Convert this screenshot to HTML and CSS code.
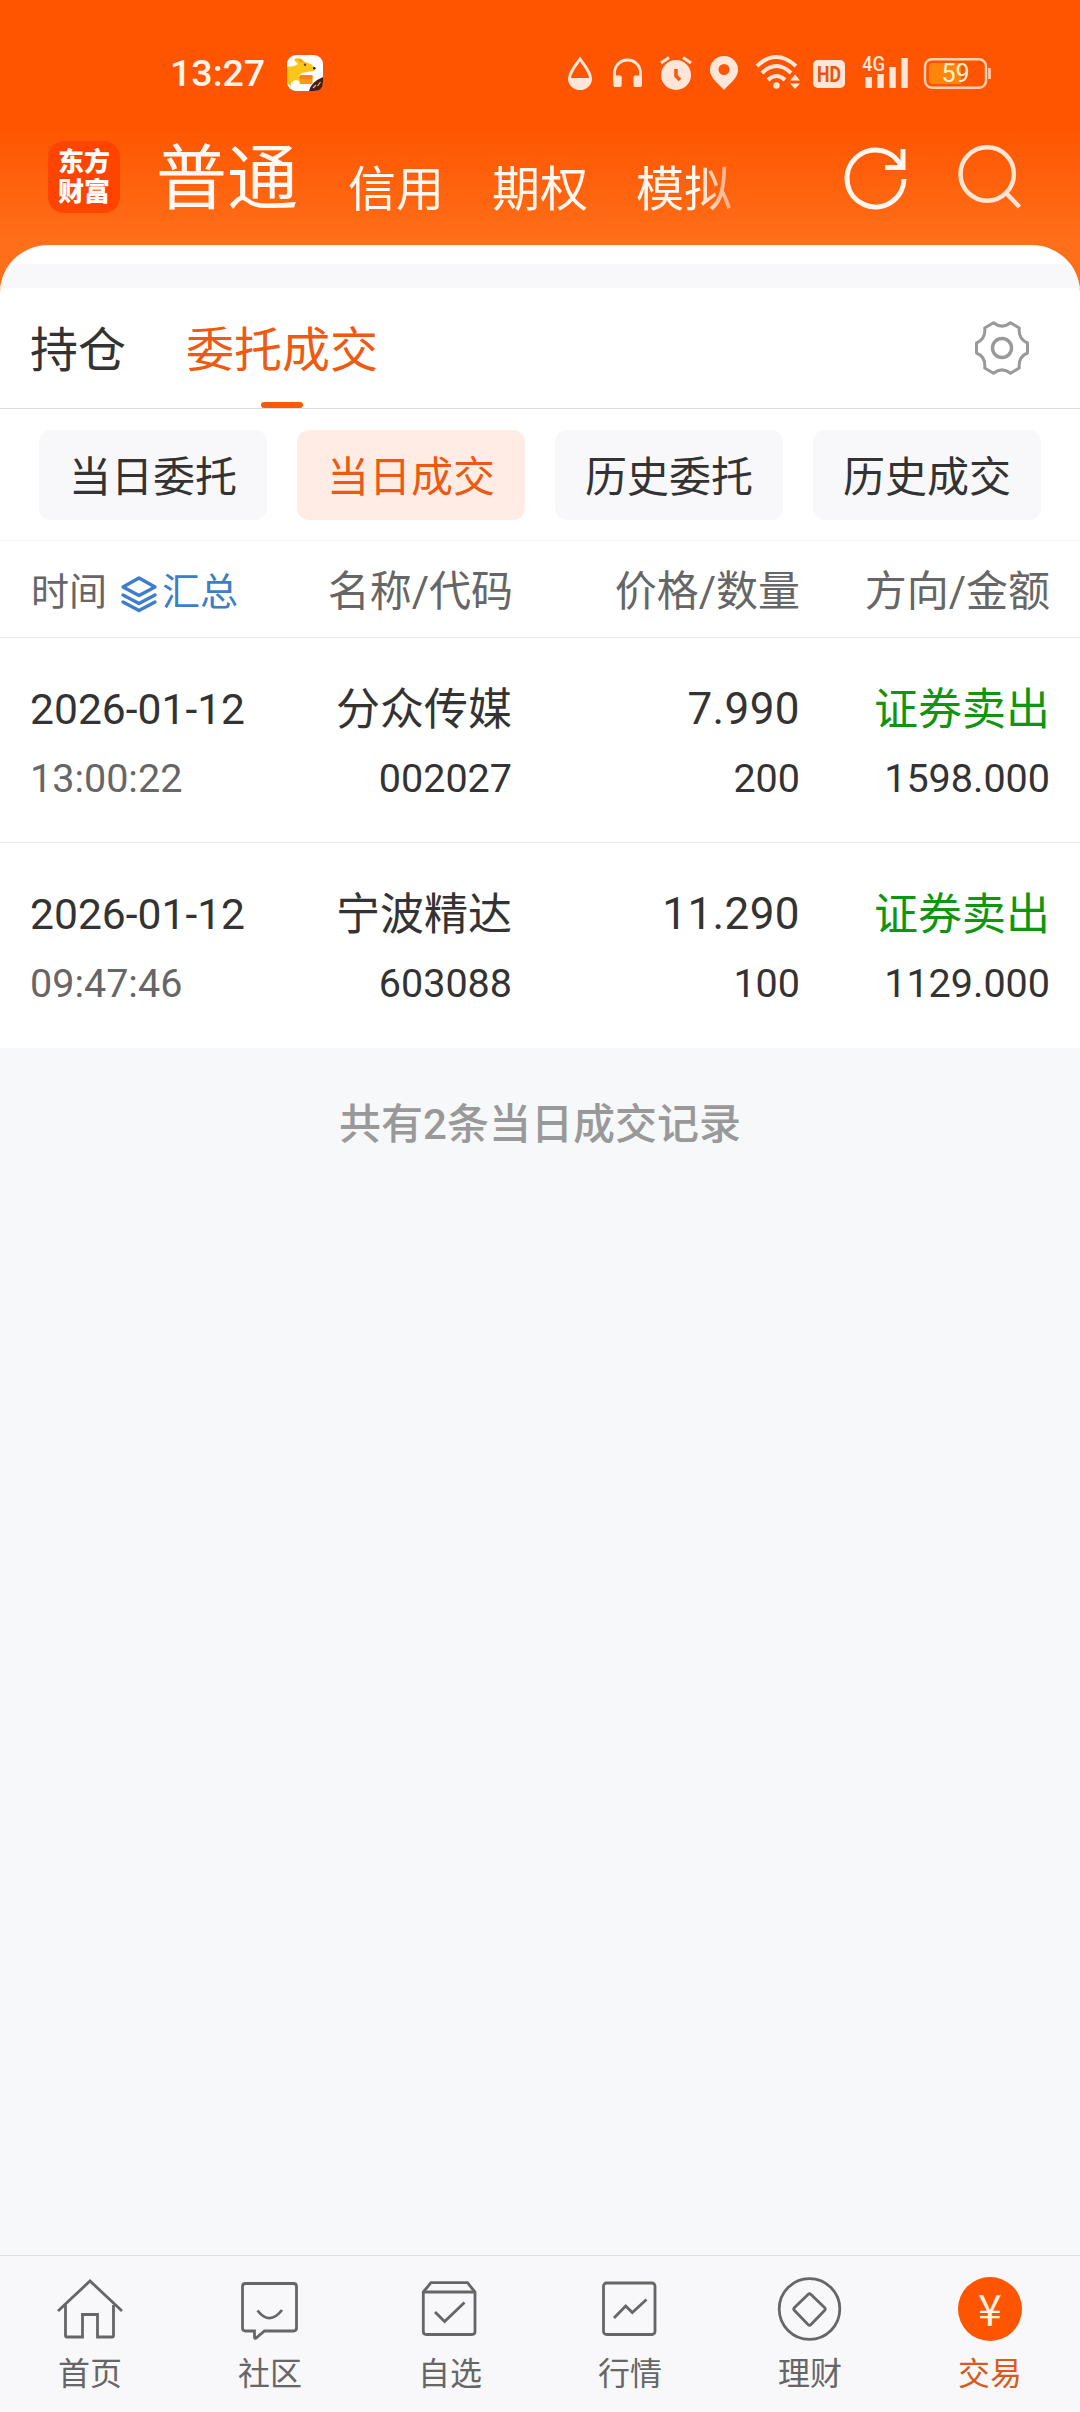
FILE: index.html
```html
<!DOCTYPE html>
<html lang="zh-CN">

<head>
    <meta charset="UTF-8">
    <meta name="viewport" content="width=device-width, initial-scale=1.0">
    <title>当日成交</title>
    <link rel="stylesheet" href="styles.css">
</head>

<body>
    <header class="top">
        <div class="status-bar">
            <span class="time">13:27</span>
            <svg class="app-icon" width="36" height="36" viewBox="0 0 36 36">
                <rect width="36" height="36" rx="9" fill="#fff" />
                <path d="M0 12L7 11L11 9L7 5L9 3L14 4L18 7L24 9L28 13L27 16L20 17L15 18L11 21L14 23L13 26L8 25L4 28L4 31L0 28Z" fill="#fbc51a" />
                <path d="M11 3.500L15 4.500L17 8L12 6.500Z" fill="#f2a60d" />
                <circle cx="18" cy="9.700" r="1.200" fill="#6b4a10" />
                <circle cx="27.300" cy="13.300" r="1.300" fill="#222" />
                <rect x="12.500" y="20" width="13" height="9" rx="1" fill="#fb9b0a" />
                <path d="M12.500 20.500H25.500V24H12.500Z" fill="#f5840c" />
                <path d="M22 36Q24 27 36 22V27Q36 36 27 36Z" fill="#4a1c10" />
                <path d="M26 33l3-3M30.500 31l3-4" stroke="#d9b9a8" stroke-width="1.200" />
            </svg>
            <div class="status-icons">
                <svg width="26" height="36" viewBox="0 0 26 36">
                    <path d="M12 4C8 10 1.500 17 1.500 23.500a10.500 10 0 0 0 21 0C22.500 17 16 10 12 4Z" fill="none" stroke="#ffe6d9" stroke-width="3" />
                    <path d="M1.500 23H22.500a10.500 10.500 0 0 1-21 0Z" fill="#ffe6d9" />
                </svg>
                <svg width="32" height="36" viewBox="0 0 32 36">
                    <path d="M3.500 26V18a13 13 0 0 1 26 0V26" fill="none" stroke="#ffe6d9" stroke-width="2.800" />
                    <rect x="2.200" y="20.500" width="8.500" height="11.500" rx="2" fill="#ffe6d9" />
                    <rect x="22.500" y="20.500" width="8.500" height="11.500" rx="2" fill="#ffe6d9" />
                </svg>
                <svg width="32" height="36" viewBox="0 0 32 36">
                    <circle cx="16" cy="20" r="15" fill="#ffe6d9" />
                    <path d="M1 8L9 2.500M31 8L23 2.500" stroke="#ffe6d9" stroke-width="3" />
                    <path d="M16 14V21L20 25" fill="none" stroke="#ff5500" stroke-width="3.500" />
                </svg>
                <svg width="30" height="36" viewBox="0 0 30 36">
                    <path fill-rule="evenodd" d="M15 1A14 14 0 0 0 1 15C1 23 9 28 15 35C21 28 29 23 29 15A14 14 0 0 0 15 1ZM15 9a5.500 5.500 0 1 1 0 11a5.500 5.500 0 0 1 0-11Z" fill="#ffe6d9" />
                </svg>
                <svg width="44" height="36" viewBox="0 0 44 36">
                    <g fill="none" stroke="#ffe6d9" stroke-width="4">
                        <path d="M1 11Q20 -7 40 11" />
                        <path d="M6 18Q20.500 4 35 18" />
                        <path d="M12 25Q20.500 17 29 25" />
                    </g>
                    <circle cx="20.500" cy="30.500" r="3.200" fill="#ffe6d9" />
                    <path d="M39 19.500L44 25.500H34ZM39 34L34 28.500H44Z" fill="#ffe6d9" />
                </svg>
                <svg class="hd" width="32" height="36" viewBox="0 0 32 36">
                    <rect y="5" width="32" height="28" rx="5" fill="#ffe6d9" />
                    <text x="16" y="27" text-anchor="middle" font-size="22" font-weight="700" fill="#e8540c" textLength="24" lengthAdjust="spacingAndGlyphs">HD</text>
                </svg>
                <svg width="46" height="36" viewBox="0 0 46 36">
                    <text x="0" y="16" font-size="21" font-weight="500" fill="#ffe6d9" textLength="23" lengthAdjust="spacingAndGlyphs">4G</text>
                    <path d="M6.700 22V33M18.500 19V33M30.500 12V33M42.500 3V33" stroke="#ffe6d9" stroke-width="6.500" />
                </svg>
                <svg class="battery" width="66" height="36" viewBox="0 0 66 36">
                    <rect x="1" y="4.200" width="61" height="28.600" rx="7" fill="none" stroke="#ffd2b5" stroke-width="2.400" />
                    <path d="M9 8H37V29H9a4 4 0 0 1-4-4V12a4 4 0 0 1 4-4Z" fill="#ff860d" />
                    <path d="M65.500 13V24" stroke="#ffd2b5" stroke-width="2.600" />
                    <text x="31.500" y="27" text-anchor="middle" font-size="25" fill="#fff0cf">59</text>
                </svg>
            </div>
        </div>

        <div class="nav-bar">
            <div class="logo">东方<br>财富</div>
            <nav class="accounts">
                <span class="account current">普通</span>
                <span class="account">信用</span>
                <span class="account">期权</span>
                <span class="account">模拟</span>
            </nav>
            <div class="actions">
                <svg width="64" height="64" viewBox="0 0 64 64" fill="none" stroke="#fff6f0" stroke-width="5">
                    <path d="M59 34A28.500 28.500 0 1 1 57 23" />
                    <path d="M58 4V22.500H40" />
                </svg>
                <svg width="64" height="64" viewBox="0 0 64 64" fill="none" stroke="#ffe5d5" stroke-width="4.500">
                    <circle cx="29.200" cy="29" r="26.700" />
                    <path d="M47.500 47.500L61.500 62" />
                </svg>
            </div>
        </div>
    </header>

    <main class="card">
        <div class="band"></div>
        <div class="tabs">
            <span class="tab">持仓</span>
            <span class="tab active">委托成交</span>
            <svg class="settings" width="54" height="54" viewBox="0 0 54 54" fill="none" stroke="#999" stroke-width="3" stroke-linejoin="round">
                <path d="M18.500 1.800Q27 8.500 35.500 1.800L44.300 7Q43 18 52.500 22V32Q43 36 44.300 47L35.500 52.200Q27 45.500 18.500 52.200L9.700 47Q11 36 1.500 32V22Q11 18 9.700 7Z" />
                <circle cx="27" cy="27" r="9.500" stroke-width="3.400" />
            </svg>
        </div>

        <div class="filters">
            <span class="chip">当日委托</span>
            <span class="chip selected">当日成交</span>
            <span class="chip">历史委托</span>
            <span class="chip">历史成交</span>
        </div>

        <div class="row table-head">
            <div class="cell time-head">
                <span>时间</span>
                <svg width="36" height="36" viewBox="0 0 36 36" fill="none" stroke="#3d7dcc" stroke-width="3.400" stroke-linejoin="round" stroke-linecap="round">
                    <path d="M18 2L34 11L18 19.500L2 11Z" />
                    <path d="M2 19L18 27.500L34 19" />
                    <path d="M2 26L18 34.500L34 26" />
                </svg>
                <span class="summary">汇总</span>
            </div>
            <div class="cell">名称/代码</div>
            <div class="cell">价格/数量</div>
            <div class="cell">方向/金额</div>
        </div>

        <div class="row record">
            <div class="cell">
                <p class="date">2026-01-12</p>
                <p class="sub muted">13:00:22</p>
            </div>
            <div class="cell">
                <p class="name">分众传媒</p>
                <p class="sub">002027</p>
            </div>
            <div class="cell">
                <p class="price">7.990</p>
                <p class="sub">200</p>
            </div>
            <div class="cell">
                <p class="name sell">证券卖出</p>
                <p class="sub">1598.000</p>
            </div>
        </div>

        <div class="row record">
            <div class="cell">
                <p class="date">2026-01-12</p>
                <p class="sub muted">09:47:46</p>
            </div>
            <div class="cell">
                <p class="name">宁波精达</p>
                <p class="sub">603088</p>
            </div>
            <div class="cell">
                <p class="price">11.290</p>
                <p class="sub">100</p>
            </div>
            <div class="cell">
                <p class="name sell">证券卖出</p>
                <p class="sub">1129.000</p>
            </div>
        </div>
    </main>

    <p class="total">共有2条当日成交记录</p>

    <footer class="bottom-nav">
        <div class="item">
            <svg class="icon" viewBox="0 0 64 64">
                <path d="M0 34L32 4L64 34" />
                <path d="M7.500 28V58.500Q7.500 60 9 60H24.500V37.500H39.500V60H54Q55.500 60 55.500 58.500V28" />
            </svg>
            <span>首页</span>
        </div>
        <div class="item">
            <svg class="icon" viewBox="0 0 64 64">
                <path d="M7.500 6.500H55.500Q58.500 6.500 58.500 9.500V51Q58.500 54 55.500 54H26.500L18 61Q16.500 62 16.500 60V54H7.500Q4.500 54 4.500 51V9.500Q4.500 6.500 7.500 6.500Z" />
                <path d="M19.500 33.500Q31.500 49 44 33" />
            </svg>
            <span>社区</span>
        </div>
        <div class="item">
            <svg class="icon" viewBox="0 0 64 64">
                <path d="M5.300 15L13 5.700H49.500L57 15V54.500Q57 57.500 54 57.500H8.300Q5.300 57.500 5.300 54.500Z" />
                <path d="M5.300 15H57M17 35L26.600 44.500L46.500 25.500" />
            </svg>
            <span>自选</span>
        </div>
        <div class="item">
            <svg class="icon" viewBox="0 0 64 64">
                <rect x="5.500" y="6" width="51.500" height="51.500" rx="3" />
                <path d="M16 41L27.700 29L34.300 35.500L48.500 22.500" />
            </svg>
            <span>行情</span>
        </div>
        <div class="item">
            <svg class="icon" viewBox="0 0 64 64">
                <circle cx="31.500" cy="32" r="30.300" />
                <path d="M30 17.500Q31.500 16 33 17.500L46.500 30.500Q48 32 46.500 33.500L33 47.500Q31.500 49 30 47.500L16.500 33.500Q15 32 16.500 30.500Z" />
            </svg>
            <span>理财</span>
        </div>
        <div class="item on">
            <div class="coin">¥</div>
            <span>交易</span>
        </div>
    </footer>
</body>

</html>
```
FILE: styles.css
```css
* {
    box-sizing: border-box;
}

body {
    margin: 0;
    min-height: 2412px;
    display: flex;
    flex-direction: column;
    font-family: Roboto, "Noto Sans CJK SC", sans-serif;
    color: #333;
    background-color: #f7f8fa;
}

p {
    margin: 0;
}

svg {
    display: block;
    flex: none;
    overflow: visible;
}

/* header */
.top {
    height: 293px;
    background: linear-gradient(#ff5500 125px, #ff6f1a 245px);
}

.status-bar {
    display: flex;
    align-items: center;
    height: 117px;
    padding: 28px 89px 0 170px;
}

.time {
    font-size: 37.5px;
    line-height: 38px;
    color: #fff3ea;
    font-weight: 500;
    width: 117px;
}

.status-icons {
    display: flex;
    gap: 17px;
    margin-left: auto;
}

.hd {
    margin-left: -4px;
}

.battery {
    margin-left: -1px;
    margin-right: 1px;
}

.nav-bar {
    display: flex;
    align-items: center;
    height: 120px;
    padding: 0 58px 0 48px;
}

.logo {
    width: 72px;
    height: 72px;
    padding-top: 6px;
    border-radius: 16px;
    background-color: #ff4400;
    color: #fff;
    font-size: 26px;
    line-height: 30px;
    font-weight: 900;
    text-align: center;
}

.accounts {
    display: flex;
    align-items: flex-end;
    gap: 48px;
    width: 640px;
    height: 73px;
    margin-left: 36px;
    color: #fff8f2;
    -webkit-mask-image: linear-gradient(to right, #000 540px, transparent 608px);
    mask-image: linear-gradient(to right, #000 540px, transparent 608px);
}

.account {
    font-size: 48px;
    line-height: 48px;
}

.account.current {
    width: 144px;
    font-size: 71px;
    line-height: 71px;
}

.actions {
    display: flex;
    gap: 49px;
    margin-left: auto;
}

/* content card */
.card {
    margin-top: -48px;
    padding-top: 19px;
    border-radius: 48px 48px 0 0;
    background-color: #fff;
    overflow: hidden;
}

.band {
    height: 24px;
    background-color: #f8f8fb;
}

.tabs {
    display: flex;
    align-items: center;
    gap: 60px;
    height: 121px;
    padding: 0 51px 0 30px;
    border-bottom: 1px solid #ddd;
}

.tab {
    display: flex;
    flex-direction: column;
    align-items: center;
    height: 120px;
    font-size: 48px;
    line-height: 126px;
}

.tab.active {
    color: #ee5a12;
}

.tab.active::after {
    content: "";
    width: 42px;
    height: 6px;
    margin-top: -12px;
    border-radius: 3px;
    background-color: #f9590a;
}

.settings {
    margin-left: auto;
}

.filters {
    display: flex;
    gap: 30px;
    padding: 21px 39px 20px;
    border-bottom: 1px solid #f5f5f5;
}

.chip {
    flex: 1;
    height: 90px;
    border-radius: 12px;
    background-color: #f8f8fb;
    font-size: 42px;
    line-height: 96px;
    text-align: center;
}

.chip.selected {
    background-color: #ffede5;
    color: #ea5a14;
}

/* records */
.row {
    display: grid;
    grid-template-columns: 240px 242px 288px 250px;
    padding: 0 30px;
    border-bottom: 1px solid #ebebeb;
}

.cell {
    text-align: right;
}

.cell:first-child {
    text-align: left;
}

.table-head {
    height: 97px;
    color: #666;
    font-size: 42px;
    line-height: 102px;
}

.table-head .cell:nth-child(2) {
    margin-right: -1px;
}

.time-head {
    display: flex;
    align-items: center;
    padding-left: 1px;
    font-size: 38px;
}

.time-head svg {
    margin: 4px 5px 0 14px;
}

.summary {
    color: #3d7dcc;
}

.record {
    height: 205px;
    padding-top: 41px;
}

.record:last-child {
    border-bottom: none;
}

.date,
.name,
.price {
    height: 60px;
    font-size: 42.6px;
    line-height: 60px;
}

.name {
    font-size: 44px;
    line-height: 62px;
}

.price {
    font-size: 44px;
    letter-spacing: 0.4px;
}

.sub {
    margin-top: 10px;
    font-size: 39.5px;
    line-height: 60px;
}

.muted {
    color: #666;
}

.sell {
    color: #109510;
}

.total {
    margin-top: 47px;
    font-size: 42px;
    line-height: 60px;
    font-weight: 500;
    color: #999;
    text-align: center;
}

/* bottom navigation */
.bottom-nav {
    display: flex;
    height: 157px;
    margin-top: auto;
    padding-top: 21px;
    border-top: 1px solid #dfe1e3;
    background-color: #f8f8fb;
}

.item {
    flex: 1;
    display: flex;
    flex-direction: column;
    align-items: center;
    gap: 11px;
    color: #666;
    font-size: 32px;
    line-height: 44px;
}

.icon {
    width: 64px;
    height: 64px;
    fill: none;
    stroke: #666;
    stroke-width: 2.8;
}

.coin {
    width: 64px;
    height: 64px;
    border-radius: 50%;
    background-color: #ff5500;
    color: #fff0e0;
    font-family: "Noto Sans CJK SC", sans-serif;
    font-size: 43px;
    line-height: 60px;
    text-align: center;
}

.item.on {
    color: #d85a1c;
}
```
